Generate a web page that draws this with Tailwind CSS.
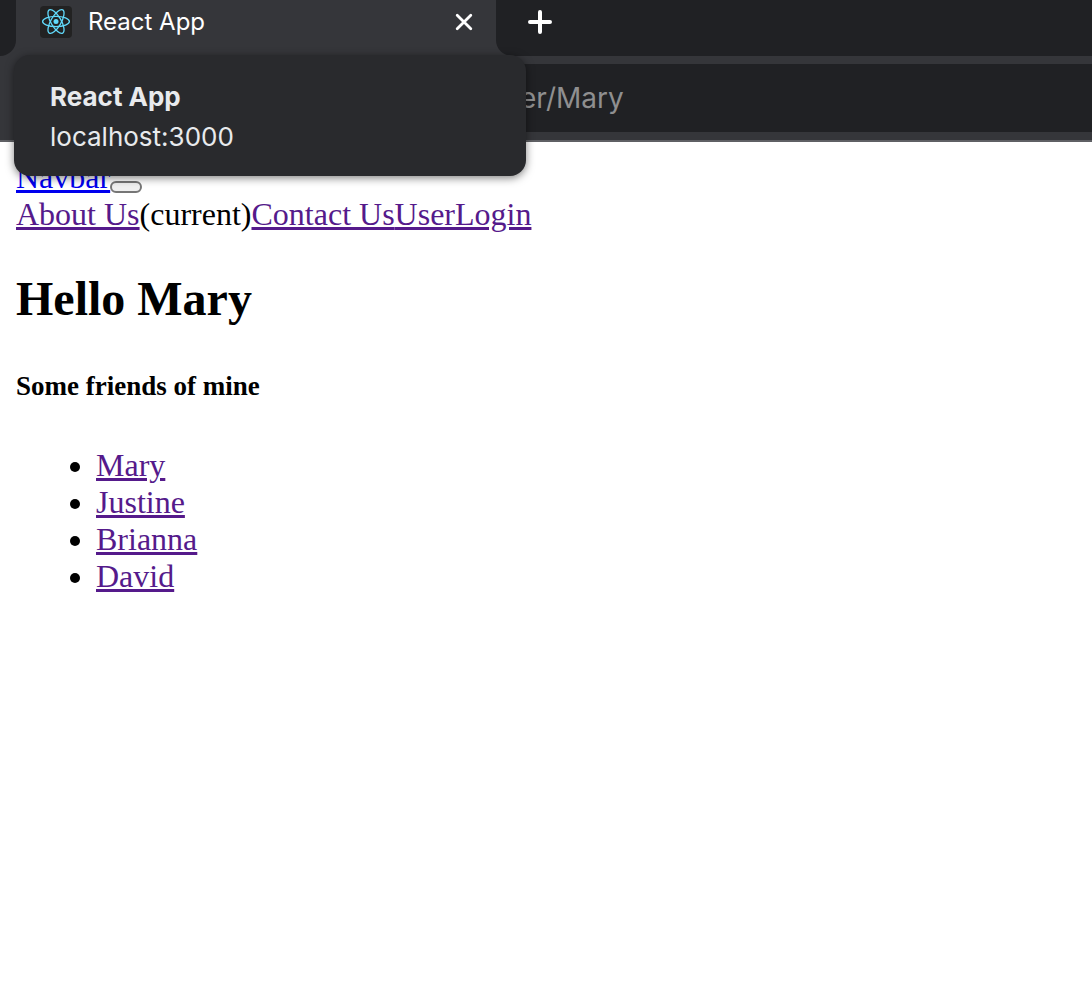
<!DOCTYPE html>
<html lang="en">
<head>
<meta charset="utf-8">
<title>React App</title>
<script src="https://cdn.jsdelivr.net/npm/@tailwindcss/browser@4"></script>
</head>
<body class="bg-white min-h-screen">
<header class="relative z-10 bg-[#35363a] border-b-2 border-[#5f6064] font-['Inter',sans-serif]">
  <div class="flex h-14">
    <div class="w-4 bg-[#202124] rounded-br-2xl"></div>
    <div class="w-[480px] flex items-center pl-6 pr-5 pb-3">
      <svg class="size-8 shrink-0" viewBox="0 0 32 32" aria-hidden="true">
        <rect width="32" height="32" rx="4" fill="#222"/>
        <g fill="none" stroke="#61dafb" stroke-width="1.3">
          <ellipse cx="16" cy="15.5" rx="13.4" ry="5.1"/>
          <ellipse cx="16" cy="15.5" rx="13.4" ry="5.1" transform="rotate(60 16 15.5)"/>
          <ellipse cx="16" cy="15.5" rx="13.4" ry="5.1" transform="rotate(120 16 15.5)"/>
        </g>
        <circle cx="16" cy="15.5" r="2.5" fill="#61dafb"/>
      </svg>
      <span class="ml-4 flex-1 text-2xl text-white">React App</span>
      <button type="button" aria-label="Close tab" class="size-6">
        <svg class="size-6" viewBox="0 0 24 24" fill="none" stroke="#fff" stroke-width="2.8" stroke-linecap="round"><path d="M5.2 5.2l13.6 13.6M18.8 5.2L5.2 18.8"/></svg>
      </button>
    </div>
    <div class="flex-1 bg-[#202124] rounded-bl-2xl flex items-center pl-8 pb-3">
      <button type="button" aria-label="New tab" class="size-6">
        <svg class="size-6" viewBox="0 0 24 24" fill="none" stroke="#fff" stroke-width="4" stroke-linecap="round"><path d="M12 2v20M2 12h20"/></svg>
      </button>
    </div>
  </div>
  <div class="py-2 pl-64">
    <input type="text" aria-label="Address" value="er/Mary" class="block w-full h-[68px] bg-[#202124] pl-[264px] text-[28px] text-[#8f8f90] outline-none">
  </div>
  <div role="tooltip" class="absolute left-[14px] top-[55px] w-[512px] rounded-2xl bg-[#292a2d] text-[#e8eaed] px-9 pt-[22px] pb-[19px] text-[26px] leading-10 shadow-[0_2px_8px_rgba(0,0,0,0.5)]">
    <div class="font-bold">React App</div>
    <div>localhost:3000</div>
  </div>
</header>
<main class="px-4 pt-[17px] pb-4 font-['Liberation_Serif',serif] text-[32px] leading-[37px] text-black">
  <nav>
    <div class="flex items-end">
      <a href="#" class="text-[#0000ee] underline decoration-[3px]">Navbar</a>
      <button type="button" aria-label="Toggle navigation" class="w-8 h-3 mb-[3px] rounded-md border-2 border-[#767676] bg-[#efefef]"></button>
    </div>
    <div class="flex">
      <a href="#" class="text-[#551a8b] underline decoration-[3px]">About Us</a><span>(current)</span><a href="#" class="text-[#551a8b] underline decoration-[3px]">Contact Us</a><a href="#" class="text-[#551a8b] underline decoration-[3px]">User</a><a href="#" class="text-[#551a8b] underline decoration-[3px]">Login</a>
    </div>
  </nav>
  <h1 class="mt-[38px] text-5xl leading-[56px] font-bold">Hello Mary</h1>
  <h5 class="mt-11 text-[27px] leading-[30px] font-bold">Some friends of mine</h5>
  <ul class="mt-[46px] pl-20 list-disc">
    <li><a href="#" class="text-[#551a8b] underline decoration-[3px]">Mary</a></li>
    <li><a href="#" class="text-[#551a8b] underline decoration-[3px]">Justine</a></li>
    <li><a href="#" class="text-[#551a8b] underline decoration-[3px]">Brianna</a></li>
    <li><a href="#" class="text-[#551a8b] underline decoration-[3px]">David</a></li>
  </ul>
</main>
</body>
</html>
